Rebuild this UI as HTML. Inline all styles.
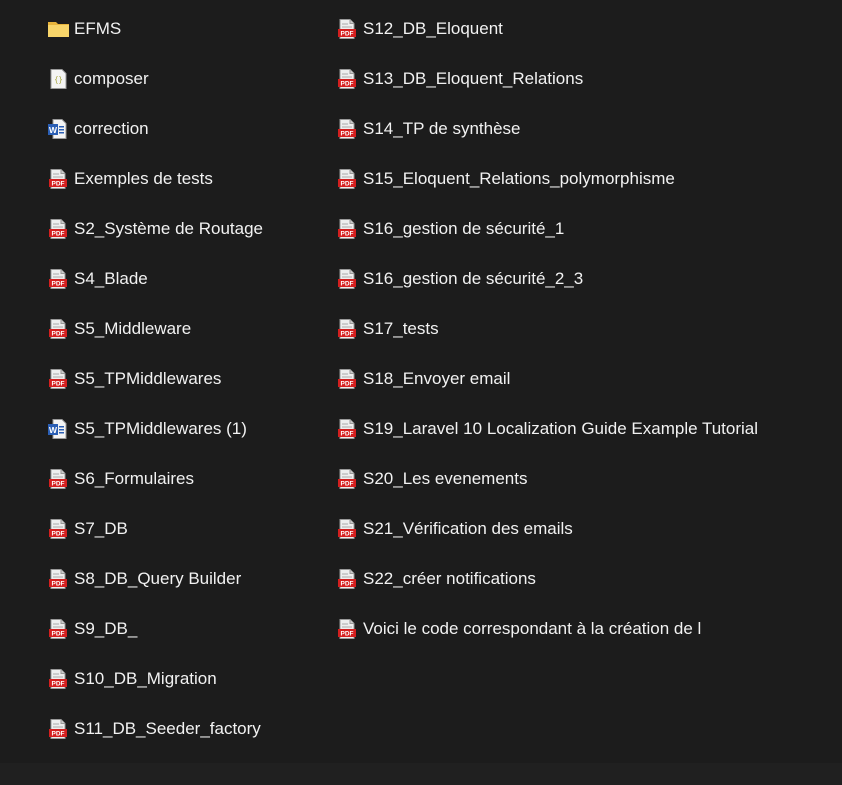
<!DOCTYPE html>
<html><head><meta charset="utf-8"><style>
html,body{margin:0;padding:0;width:842px;height:785px;overflow:hidden;background:#1c1c1c;font-family:"Liberation Sans",sans-serif;}
.bot{position:absolute;left:0;top:763px;width:842px;height:22px;background:#202020}
.it{position:absolute;height:20px;color:#f2f2f2;font-size:17px;line-height:20px;white-space:nowrap}
.it svg{position:absolute;left:0;top:1px}
.it span{position:absolute;left:26px;top:1px}
</style></head><body>
<div class="bot"></div>
<svg width="0" height="0" style="position:absolute">
<defs>
<g id="pdf"><path d="M3 0.5h10l4 4v15h-14z" fill="#eee" stroke="#999" stroke-width="1"/><path d="M13 0.5v4h4" fill="#ccc" stroke="#999" stroke-width="1"/><line x1="5" y1="5" x2="11" y2="5" stroke="#aaa"/><line x1="5" y1="8" x2="15" y2="8" stroke="#aaa"/><rect x="1" y="10" width="18" height="8" fill="#d41f1f"/><text x="10" y="16.6" font-size="6.5" font-family="Liberation Sans" font-weight="bold" fill="#fff" text-anchor="middle">PDF</text></g>
<g id="doc"><path d="M5 0.5h9l4 4v15h-13z" fill="#f4f4f4" stroke="#999"/><rect x="11" y="7" width="5" height="1.5" fill="#2b5fb5"/><rect x="11" y="10" width="5" height="1.5" fill="#2b5fb5"/><rect x="11" y="13" width="5" height="1.5" fill="#2b5fb5"/><rect x="0" y="5" width="10" height="11" fill="#2b5fb5"/><text x="5" y="14" font-size="8.5" font-family="Liberation Sans" font-weight="bold" fill="#fff" text-anchor="middle">W</text></g>
</defs></svg>
<div class="it" style="left:48px;top:18px"><svg width="22" height="20"><path d="M0 3h8l2 2h11v13h-21z" fill="#e8b43c"/><path d="M0 6h21v12h-21z" fill="#f8d56a"/></svg><span>EFMS</span></div>
<div class="it" style="left:48px;top:68px"><svg width="22" height="20"><path d="M3 0.5h11l4 4v15h-15z" fill="#f4f4f4" stroke="#999"/><text x="10.5" y="13" font-size="7" font-family="Liberation Mono" fill="#9a9a20" text-anchor="middle">{}</text></svg><span>composer</span></div>
<div class="it" style="left:48px;top:118px"><svg width="22" height="20"><use href="#doc"/></svg><span>correction</span></div>
<div class="it" style="left:48px;top:168px"><svg width="22" height="20"><use href="#pdf"/></svg><span>Exemples de tests</span></div>
<div class="it" style="left:48px;top:218px"><svg width="22" height="20"><use href="#pdf"/></svg><span>S2_Système de Routage</span></div>
<div class="it" style="left:48px;top:268px"><svg width="22" height="20"><use href="#pdf"/></svg><span>S4_Blade</span></div>
<div class="it" style="left:48px;top:318px"><svg width="22" height="20"><use href="#pdf"/></svg><span>S5_Middleware</span></div>
<div class="it" style="left:48px;top:368px"><svg width="22" height="20"><use href="#pdf"/></svg><span>S5_TPMiddlewares</span></div>
<div class="it" style="left:48px;top:418px"><svg width="22" height="20"><use href="#doc"/></svg><span>S5_TPMiddlewares (1)</span></div>
<div class="it" style="left:48px;top:468px"><svg width="22" height="20"><use href="#pdf"/></svg><span>S6_Formulaires</span></div>
<div class="it" style="left:48px;top:518px"><svg width="22" height="20"><use href="#pdf"/></svg><span>S7_DB</span></div>
<div class="it" style="left:48px;top:568px"><svg width="22" height="20"><use href="#pdf"/></svg><span>S8_DB_Query Builder</span></div>
<div class="it" style="left:48px;top:618px"><svg width="22" height="20"><use href="#pdf"/></svg><span>S9_DB_</span></div>
<div class="it" style="left:48px;top:668px"><svg width="22" height="20"><use href="#pdf"/></svg><span>S10_DB_Migration</span></div>
<div class="it" style="left:48px;top:718px"><svg width="22" height="20"><use href="#pdf"/></svg><span>S11_DB_Seeder_factory</span></div>

<div class="it" style="left:337px;top:18px"><svg width="22" height="20"><use href="#pdf"/></svg><span>S12_DB_Eloquent</span></div>
<div class="it" style="left:337px;top:68px"><svg width="22" height="20"><use href="#pdf"/></svg><span>S13_DB_Eloquent_Relations</span></div>
<div class="it" style="left:337px;top:118px"><svg width="22" height="20"><use href="#pdf"/></svg><span>S14_TP de synthèse</span></div>
<div class="it" style="left:337px;top:168px"><svg width="22" height="20"><use href="#pdf"/></svg><span>S15_Eloquent_Relations_polymorphisme</span></div>
<div class="it" style="left:337px;top:218px"><svg width="22" height="20"><use href="#pdf"/></svg><span>S16_gestion de sécurité_1</span></div>
<div class="it" style="left:337px;top:268px"><svg width="22" height="20"><use href="#pdf"/></svg><span>S16_gestion de sécurité_2_3</span></div>
<div class="it" style="left:337px;top:318px"><svg width="22" height="20"><use href="#pdf"/></svg><span>S17_tests</span></div>
<div class="it" style="left:337px;top:368px"><svg width="22" height="20"><use href="#pdf"/></svg><span>S18_Envoyer email</span></div>
<div class="it" style="left:337px;top:418px"><svg width="22" height="20"><use href="#pdf"/></svg><span>S19_Laravel 10 Localization Guide Example Tutorial</span></div>
<div class="it" style="left:337px;top:468px"><svg width="22" height="20"><use href="#pdf"/></svg><span>S20_Les evenements</span></div>
<div class="it" style="left:337px;top:518px"><svg width="22" height="20"><use href="#pdf"/></svg><span>S21_Vérification des emails</span></div>
<div class="it" style="left:337px;top:568px"><svg width="22" height="20"><use href="#pdf"/></svg><span>S22_créer notifications</span></div>
<div class="it" style="left:337px;top:618px"><svg width="22" height="20"><use href="#pdf"/></svg><span>Voici le code correspondant à la création de l</span></div>
</body></html>
